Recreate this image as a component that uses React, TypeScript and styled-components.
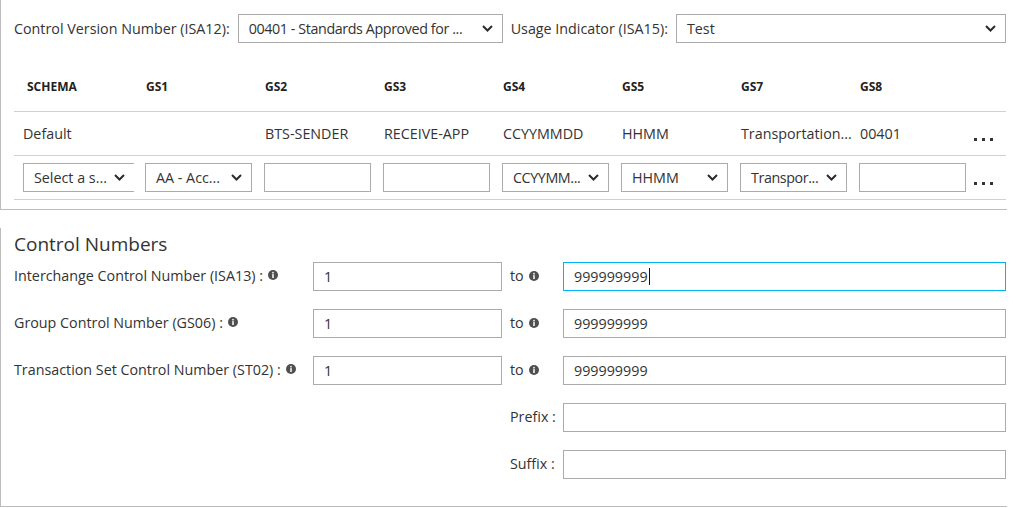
import React from "react";
import styled, { createGlobalStyle } from "styled-components";

const GlobalStyle = createGlobalStyle`
  html, body {
    margin: 0;
    padding: 0;
    background: #ffffff;
  }
  body {
    font-family: "Segoe UI", "Open Sans", sans-serif;
    font-size: 14.3px;
    color: #333333;
  }
  * { box-sizing: border-box; }
`;

const Page = styled.div`
  display: flex;
  flex-direction: column;
  gap: 18px;
`;

const Panel = styled.section<{ $pad: string }>`
  width: 1007px;
  border-left: 1px solid #bcbcbc;
  border-bottom: 1px solid #bcbcbc;
  padding: ${(p) => p.$pad};
`;

const TopRow = styled.div`
  display: flex;
  align-items: center;
  gap: 8px;
  height: 29px;
`;

const Label = styled.span`
  white-space: nowrap;
  color: #333333;
`;

const SelectBox = styled.div<{ $width?: number; $noRight?: boolean; $grow?: boolean }>`
  display: flex;
  align-items: center;
  justify-content: space-between;
  gap: 2px;
  height: 29px;
  width: ${(p) => (p.$width ? `${p.$width}px` : "auto")};
  flex: ${(p) => (p.$grow ? "1" : "none")};
  border: 1px solid #ababab;
  border-right: ${(p) => (p.$noRight ? "none" : "1px solid #ababab")};
  padding: 0 9px 0 10px;
  background: #fff;
  white-space: nowrap;
  overflow: hidden;
  color: #333;
`;

const SelectText = styled.span<{ $tight?: boolean }>`
  white-space: nowrap;
  letter-spacing: ${(p) => (p.$tight ? "-0.4px" : "normal")};
`;

const Table = styled.div`
  margin-top: 18px;
  display: flex;
  flex-direction: column;
`;

const TRow = styled.div<{ $h: number }>`
  display: grid;
  grid-template-columns: 122px repeat(6, 119px) 114px 1fr;
  align-items: center;
  height: ${(p) => p.$h}px;
  padding-left: 9px;
  border-bottom: 1px solid #d0d0d0;
`;

const HeadCell = styled.div<{ $first?: boolean }>`
  font-size: 12px;
  font-weight: 700;
  color: #222;
  padding-left: ${(p) => (p.$first ? 4 : 1)}px;
`;

const Cell = styled.div<{ $first?: boolean; $flush?: boolean }>`
  padding-left: ${(p) => (p.$first || p.$flush ? 0 : 1)}px;
  white-space: nowrap;
  overflow: hidden;
`;

const Dots = styled.div`
  display: flex;
  gap: 5px;
  margin-top: 12px;
  padding-left: 1px;
  span {
    width: 3px;
    height: 3px;
    background: #333;
  }
`;

const Field = styled.div<{ $width?: number; $focused?: boolean }>`
  display: flex;
  align-items: center;
  height: 29px;
  width: ${(p) => (p.$width ? `${p.$width}px` : "100%")};
  border: 1px solid ${(p) => (p.$focused ? "#00b4ef" : "#ababab")};
  padding: 0 10px;
  background: #fff;
  color: #333;
  white-space: nowrap;
`;

const Caret = styled.span`
  display: inline-block;
  width: 1px;
  height: 17px;
  background: #111;
  margin-left: 1px;
`;

const Heading = styled.h2`
  margin: 0;
  font-size: 19px;
  font-weight: 400;
  line-height: 24px;
  color: #333;
`;

const Grid = styled.div`
  margin-top: 6px;
  display: grid;
  grid-template-columns: 299px 189px 61px 443px;
  grid-auto-rows: 29px;
  row-gap: 18px;
  align-items: center;
`;

const RowLabel = styled.div`
  display: flex;
  align-items: center;
  gap: 5px;
  white-space: nowrap;
  padding-bottom: 3px;
`;

const ToLabel = styled.div<{ $col?: number }>`
  display: flex;
  align-items: center;
  gap: 5px;
  padding-left: 8px;
  padding-bottom: 2px;
  white-space: nowrap;
  grid-column: ${(p) => (p.$col ? p.$col : "auto")};
`;

const Chevron = () => (
  <svg width="11" height="7" viewBox="0 0 11 7" style={{ flex: "none" }}>
    <polyline points="1,1 5.5,5.5 10,1" fill="none" stroke="#2b2b2b" strokeWidth="2" />
  </svg>
);

const Info = () => (
  <svg width="10" height="10" viewBox="0 0 10 10" style={{ flex: "none" }}>
    <circle cx="5" cy="5" r="5" fill="#4f4f4f" />
    <circle cx="5" cy="2.7" r="0.85" fill="#fff" />
    <rect x="4.25" y="4.1" width="1.5" height="3.9" fill="#fff" />
  </svg>
);

const Select = ({
  text,
  width,
  noRight,
  grow,
  tight,
}: {
  text: string;
  width?: number;
  noRight?: boolean;
  grow?: boolean;
  tight?: boolean;
}) => (
  <SelectBox $width={width} $noRight={noRight} $grow={grow}>
    <SelectText $tight={tight}>{text}</SelectText>
    <Chevron />
  </SelectBox>
);

const Ellipsis = () => (
  <Dots>
    <span />
    <span />
    <span />
  </Dots>
);

const headers = ["SCHEMA", "GS1", "GS2", "GS3", "GS4", "GS5", "GS7", "GS8"];
const values = ["Default", "", "BTS-SENDER", "RECEIVE-APP", "CCYYMMDD", "HHMM", "Transportation...", "00401"];

export default function App() {
  return (
    <>
      <GlobalStyle />
      <Page>
        <Panel $pad="14px 1px 9px 13px">
          <TopRow>
            <Label>Control Version Number (ISA12):</Label>
            <Select text="00401 - Standards Approved for ..." width={265} tight />
            <Label>Usage Indicator (ISA15):</Label>
            <Select text="Test" grow />
          </TopRow>
          <Table>
            <TRow $h={51}>
              {headers.map((h, i) => (
                <HeadCell key={h} $first={i === 0}>
                  {h}
                </HeadCell>
              ))}
            </TRow>
            <TRow $h={44}>
              {values.map((v, i) => (
                <Cell key={i} $first={i === 0}>
                  {v}
                </Cell>
              ))}
              <Ellipsis />
            </TRow>
            <TRow $h={44}>
              <Cell $first>
                <Select text="Select a s..." width={111} noRight />
              </Cell>
              <Cell $flush>
                <Select text="AA - Acc..." width={107} />
              </Cell>
              <Cell $flush>
                <Field $width={107} />
              </Cell>
              <Cell $flush>
                <Field $width={107} />
              </Cell>
              <Cell $flush>
                <Select text="CCYYMM..." width={107} tight />
              </Cell>
              <Cell $flush>
                <Select text="HHMM" width={107} />
              </Cell>
              <Cell $flush>
                <Select text="Transpor..." width={107} tight />
              </Cell>
              <Cell $flush>
                <Field $width={107} />
              </Cell>
              <Ellipsis />
            </TRow>
          </Table>
        </Panel>
        <Panel $pad="4px 1px 27px 13px">
          <Heading>Control Numbers</Heading>
          <Grid>
            <RowLabel>
              Interchange Control Number (ISA13) : <Info />
            </RowLabel>
            <Field>1</Field>
            <ToLabel>
              to <Info />
            </ToLabel>
            <Field $focused>
              999999999
              <Caret />
            </Field>

            <RowLabel>
              Group Control Number (GS06) : <Info />
            </RowLabel>
            <Field>1</Field>
            <ToLabel>
              to <Info />
            </ToLabel>
            <Field>999999999</Field>

            <RowLabel>
              Transaction Set Control Number (ST02) : <Info />
            </RowLabel>
            <Field>1</Field>
            <ToLabel>
              to <Info />
            </ToLabel>
            <Field>999999999</Field>

            <ToLabel $col={3}>Prefix :</ToLabel>
            <Field />

            <ToLabel $col={3}>Suffix :</ToLabel>
            <Field />
          </Grid>
        </Panel>
      </Page>
    </>
  );
}
